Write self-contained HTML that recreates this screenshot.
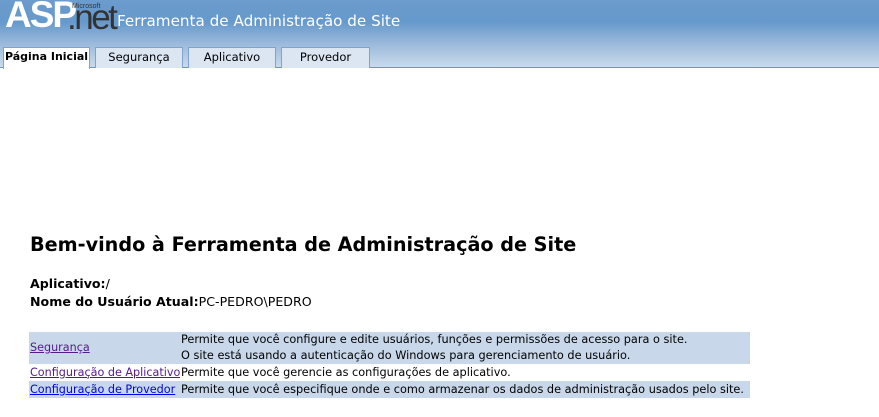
<!DOCTYPE html>
<html><head><meta charset="utf-8"><style>
body{margin:0;width:879px;height:417px;background:#fff;font-family:"DejaVu Sans",Verdana,sans-serif;overflow:hidden;position:relative}
.hdr{position:absolute;left:0;top:0;width:879px;height:67px;background:linear-gradient(#6c9bcd 0px,#6699cc 22px,#9ebbdc 45px,#c8dbeb 67px);border-bottom:1px solid #6b96c8}
.logo{position:absolute;left:5px;top:-6px;font-family:"Liberation Sans",Arial,sans-serif;font-weight:bold;font-size:37px;color:#fff;letter-spacing:-2px}
.net{position:absolute;left:67px;top:-2px;font-family:"Liberation Sans",Arial,sans-serif;font-size:35px;color:#333;letter-spacing:-2.5px}
.ms{position:absolute;left:72px;top:3px;font-size:7px;color:#333;font-family:"Liberation Sans",sans-serif}
.title{position:absolute;left:117px;top:12px;font-family:"DejaVu Sans",sans-serif;font-size:15.2px;color:#fff}
.tab{position:absolute;top:47px;height:20px;background:#dbe6f2;border:1px solid #7fa3cc;border-bottom:none;font-size:11.5px;text-align:center;line-height:18px;color:#000}
.tab.a{background:#fff;font-weight:bold;height:21px;z-index:2;font-size:11px}
h1{position:absolute;left:30px;top:233px;margin:0;font-size:19.2px;font-weight:bold}
.l{position:absolute;left:30px;font-size:12.6px}
.l b{font-weight:bold}
table{position:absolute;left:29px;top:332px;border-collapse:collapse;font-size:11.3px;width:721px;table-layout:fixed}
td{padding:0 0 0 1px;vertical-align:middle;white-space:nowrap;line-height:16px;overflow:hidden}
tr.b td{background:#c8d8ea}
a{color:#551a8b;font-size:11.2px}
a.u{color:#0000ee}
</style></head><body>
<div class="hdr">
<div class="logo">ASP</div><div class="ms">Microsoft</div><div class="net">.net</div>
<div class="title">Ferramenta de Administração de Site</div>
<div class="tab a" style="left:3px;width:85px">Página Inicial</div>
<div class="tab" style="left:95px;width:86px">Segurança</div>
<div class="tab" style="left:188px;width:86px">Aplicativo</div>
<div class="tab" style="left:281px;width:87px">Provedor</div>
</div>
<h1>Bem-vindo à Ferramenta de Administração de Site</h1>
<div class="l" style="top:276px"><b>Aplicativo:</b>/</div>
<div class="l" style="top:294px"><b>Nome do Usuário Atual:</b>PC-PEDRO\PEDRO</div>
<table>
<colgroup><col style="width:151px"><col></colgroup>
<tr class="b"><td style="height:32px"><a href="#">Segurança</a></td><td>Permite que você configure e edite usuários, funções e permissões de acesso para o site.<br>O site está usando a autenticação do Windows para gerenciamento de usuário.</td></tr>
<tr><td style="height:17px"><a href="#">Configuração de Aplicativo</a></td><td>Permite que você gerencie as configurações de aplicativo.</td></tr>
<tr class="b"><td style="height:17px"><a class="u" href="#">Configuração de Provedor</a></td><td>Permite que você especifique onde e como armazenar os dados de administração usados pelo site.</td></tr>
</table>
</body></html>
